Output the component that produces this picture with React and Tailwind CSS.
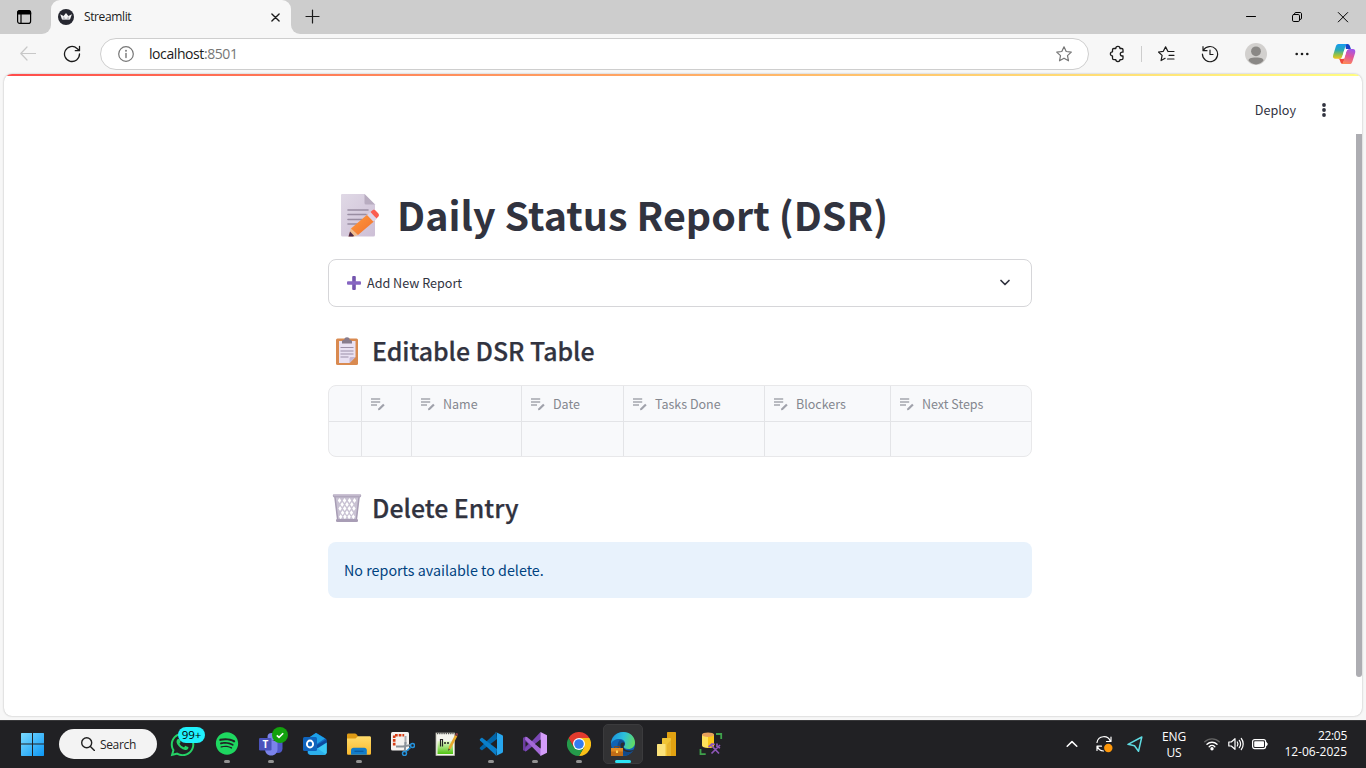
import React from "react";
import { FaWhatsapp, FaSpotify } from "react-icons/fa";

const line = { fill: "none", stroke: "currentColor", strokeLinecap: "round", strokeLinejoin: "round" };

/* ---------- browser chrome ---------- */

function TabStrip() {
  return (
    <div className="flex h-[34px] bg-[#f7f7f7]">
      <div className="flex w-[51px] shrink-0 items-center justify-end rounded-br-[9px] bg-[#cdcdcd]">
        <svg className="mr-[19px] h-4 w-4 text-black" viewBox="0 0 16 16" {...line} strokeWidth="1.2">
          <rect x="1.6" y="1.6" width="13" height="12.8" rx="2.2" />
          <path d="M1.6 4.2C1.6 2.4 2.4 1.6 4 1.6h8.200C13.800 1.600 14.600 2.400 14.600 4.200V5H1.600Z" fill="currentColor" />
          <path d="M5 5v9.200" />
        </svg>
      </div>
      <div className="flex h-[34px] w-[240px] shrink-0 flex-col bg-linear-to-b from-[#cdcdcd] from-50% to-[#f7f7f7] to-50%">
        <div className="flex h-[34px] items-center rounded-t-[9px] bg-[#f7f7f7]">
          <svg className="ml-[7px] h-4 w-4" viewBox="0 0 16 16">
            <circle cx="8" cy="8" r="8" fill="#262730" />
            <path d="M2.200 5.200 5.600 7.100 8 4 10.400 7.100 13.900 5.200 12 10.600H4Z" fill="#f4f4f4" />
            <path d="M5.600 7.100 8 10.500 10.400 7.100 11.500 10.600H4.500Z" fill="#c4c4c8" />
          </svg>
          <span className="ml-[10px] font-['Open_Sans'] text-[12px] leading-4 tracking-[-0.38px] text-[#1b1b1b]">Streamlit</span>
          <svg className="ml-auto mr-[11px] mt-px h-[9px] w-[9px] text-[#1b1b1b]" viewBox="0 0 10 10" {...line} strokeWidth="1.500">
            <path d="m1 1 8 8M9 1 1 9" />
          </svg>
        </div>
      </div>
      <div className="flex flex-1 items-center rounded-bl-[9px] bg-[#cdcdcd]">
        <svg className="ml-[14px] h-4 w-4 text-[#1b1b1b]" viewBox="0 0 16 16" {...line} strokeWidth="1.2">
          <path d="M7.500 1v13M1 7.500h13" />
        </svg>
        <svg className="ml-auto h-3 w-3 text-black" viewBox="0 0 12 12" {...line} strokeWidth="1">
          <path d="M1.500 5.500h9" />
        </svg>
        <svg className="ml-[34px] h-3 w-3 text-black" viewBox="0 0 12 12" {...line} strokeWidth="1">
          <rect x="1.500" y="3.500" width="7" height="7" rx="1.300" />
          <path d="M3.500 3.200V2.900c0-.9.600-1.400 1.400-1.400H9c1 0 1.500.5 1.500 1.500v4.100c0 .8-.5 1.400-1.400 1.400h-.3" />
        </svg>
        <svg className="ml-[34px] mr-[17px] h-3 w-3 text-black" viewBox="0 0 12 12" {...line} strokeWidth="1">
          <path d="m1.300 1.500 9.400 9.400M10.700 1.500l-9.400 9.400" />
        </svg>
      </div>
    </div>
  );
}

function CopilotIcon() {
  return (
    <svg className="h-[22px] w-[24px]" viewBox="0 0 24 22">
      <defs>
        <linearGradient id="cpa" x1="0" y1="0" x2="0" y2="1">
          <stop offset="0" stopColor="#159bf0" />
          <stop offset=".4" stopColor="#28a9b8" />
          <stop offset=".7" stopColor="#8fc04a" />
          <stop offset="1" stopColor="#f6c51c" />
        </linearGradient>
        <linearGradient id="cpb" x1="0.600" y1="0" x2="0.300" y2="1">
          <stop offset="0" stopColor="#a257e8" />
          <stop offset=".45" stopColor="#e0569a" />
          <stop offset="1" stopColor="#ff8a55" />
        </linearGradient>
      </defs>
      <path d="M13 1h2.500c1.300 0 2 .8 2.400 2l1 3H14Z" fill="#1743c8" />
      <path d="M6.500 1H15c-1 .6-1.400 1.400-1.800 2.700L10.500 13c-.6 2-1.400 2.800-3.300 2.800H3.500C1.200 15.800.6 14 1.200 12L3.800 3.500C4.300 2 5 1 6.500 1Z" fill="url(#cpa)" />
      <path d="M6.200 15.800c1 0 1.500.8 1.900 2.300.5 1.800 1.100 2.900 2.900 2.900l1.600-5.200Z" fill="#ef4a3c" />
      <path d="M17.500 21H9.500c1.100-.5 1.600-1.500 2-2.800L14.200 9c.6-2 1.400-2.900 3.300-2.900h3.300c2.300 0 2.900 1.900 2.300 3.900l-2.700 8.400C19.900 20 19.100 21 17.500 21Z" fill="url(#cpb)" />
      <path d="M11.900 7.900c.4-1.200 1.200-1.700 2.300-1.700h2.300c-1.300.4-1.900 1.300-2.400 2.800l-1.500 5.100c-.4 1.200-1.200 1.700-2.400 1.700H8.300c1.200-.4 1.700-1.400 2.200-2.900Z" fill="#fff" />
    </svg>
  );
}

function Toolbar() {
  return (
    <div className="flex h-[40px] items-center bg-[#f7f7f7]">
      <svg className="ml-5 h-4 w-4 text-[#c8c8c8]" viewBox="0 0 16 16" {...line} strokeWidth="1.200">
        <path d="M15.500 7.500H1M7 1 .800 7.500 7 14" />
      </svg>
      <svg className="ml-[27px] h-[18px] w-[18px] text-[#1b1b1b]" viewBox="0 0 18 18" {...line} strokeWidth="1.300">
        <path d="M16.500 9a7.500 7.500 0 1 1-2.500-5.600L16.300 5.500M16.500 1.500v4.200h-4.200" />
      </svg>
      <div className="ml-[19px] flex h-8 w-[989px] items-center rounded-full border border-[#cecece] bg-white">
        <svg className="ml-[17px] h-4 w-4 text-[#767676]" viewBox="0 0 16 16" {...line} strokeWidth="1.200">
          <circle cx="8" cy="8" r="7.300" />
          <path d="M8 7.500v4" strokeWidth="1.400" />
          <circle cx="8" cy="4.800" r=".4" />
        </svg>
        <span className="ml-[15px] font-['Open_Sans'] text-[14px] leading-5 tracking-[-0.42px] text-[#1b1b1b]">
          localhost<span className="text-[#767676]">:8501</span>
        </span>
        <svg className="ml-auto mr-4 h-4 w-4 text-[#767676]" viewBox="0 0 16 16" {...line} strokeWidth="1.200">
          <path d="m8 .8 2.200 4.700 5.100.6-3.800 3.500 1 5.200L8 12.200l-4.500 2.600 1-5.200L.7 6.100l5.100-.6Z" />
        </svg>
      </div>
      <svg className="ml-[19px] h-[18px] w-[18px] text-[#1b1b1b]" viewBox="0 0 18 18" {...line} strokeWidth="1.300">
        <path d="M5.800 3.500h2a2.100 2.100 0 0 1 4.200 0h1.700c.7 0 1.300.6 1.300 1.300v2.400h-.8a1.900 1.900 0 0 0 0 3.800h.8v2.300c0 .7-.6 1.300-1.300 1.300H12a2.100 2.100 0 0 1-4.200 0h-2c-.7 0-1.300-.6-1.300-1.300V11a2.100 2.100 0 1 1 0-4.200v-2c0-.7.600-1.300 1.300-1.300Z" />
      </svg>
      <div className="ml-[15px] h-4 w-px bg-[#cdcdcd]" />
      <svg className="ml-4 h-4 w-[17px] text-[#1b1b1b]" viewBox="0 0 17 16" {...line} strokeWidth="1.200">
        <path d="M10 5.500 7.600.9 5.300 5.300.5 6l3.600 3.400-1 5.200 4-2.300M10 5.500h6M11 9.300h5M9.500 13h6.500" />
      </svg>
      <svg className="ml-[26px] h-[18px] w-[18px] text-[#1b1b1b]" viewBox="0 0 18 18" {...line} strokeWidth="1.200">
        <path d="M2.300 5.500A7.600 7.600 0 1 1 1.400 9M2 1.700v4h4M9 5.200v4.300h3" />
      </svg>
      <svg className="ml-[26px] h-[22px] w-[22px]" viewBox="0 0 22 22">
        <circle cx="11" cy="11" r="11" fill="#d2d0ce" />
        <circle cx="11" cy="8.300" r="4.900" fill="#8a8886" />
        <path d="M3.500 17.500c0-2 2-3.100 7.500-3.100s7.500 1.100 7.500 3.100c-1.500 2.200-4.500 3.900-7.500 3.900s-6-1.700-7.500-3.900Z" fill="#8a8886" />
      </svg>
      <svg className="ml-7 h-4 w-[14px] text-[#1b1b1b]" viewBox="0 0 14 16" fill="currentColor">
        <circle cx="1.700" cy="8" r="1.300" />
        <circle cx="7" cy="8" r="1.300" />
        <circle cx="12.300" cy="8" r="1.300" />
      </svg>
      <div className="ml-[23px]">
        <CopilotIcon />
      </div>
    </div>
  );
}

/* ---------- emoji drawings ---------- */

function MemoEmoji() {
  return (
    <svg className="-mt-0.5 h-11 w-10" viewBox="0 0 40 44">
      <defs>
        <linearGradient id="paper" x1="0" y1="0" x2="1" y2="1">
          <stop offset="0" stopColor="#e0d9e6" />
          <stop offset="1" stopColor="#cdbfd6" />
        </linearGradient>
        <linearGradient id="pencil" x1="0" y1="0" x2="1" y2="1">
          <stop offset="0" stopColor="#ff9a3d" />
          <stop offset="1" stopColor="#f0702e" />
        </linearGradient>
      </defs>
      <path d="M2 1h22.500L35 11.500V42a1.500 1.500 0 0 1-1.500 1.500H2.500A1.500 1.500 0 0 1 1 42V2a1 1 0 0 1 1-1Z" fill="url(#paper)" />
      <path d="M24.500 1 35 11.500h-9A1.500 1.500 0 0 1 24.500 10Z" fill="#b8acc0" />
      <path d="M8 17h20M8 21.500h18M8 26.500h14M8 31h9" stroke="#998da2" strokeWidth="1.600" strokeLinecap="round" />
      <path d="M8.500 43.500 11 35l7 7-4 1.500Z" fill="#f0bd8f" />
      <path d="m8.500 43.500 1.500-5 4 4.200-.8.8Z" fill="#4d2948" />
      <path d="M11 35.500 28 21l6.500 7L18 42Z" fill="url(#pencil)" />
      <path d="m27 22 3.500-3 6.300 6.800-3.300 3Z" fill="#ddd3e8" />
      <path d="m30.500 19 2-1.700c1.200-.9 2.500-.5 3.500.6l2.200 2.400c1 1.200 1 2.500 0 3.500l-1.700 1.700Z" fill="#fb5c51" />
    </svg>
  );
}

function PlusEmoji() {
  return (
    <svg className="h-[14px] w-[14px]" viewBox="0 0 14 14">
      <rect x="5.200" y="0" width="3.600" height="14" rx="1" fill="#7455ae" />
      <rect x="0" y="5.200" width="14" height="3.600" rx="1" fill="#8665c2" />
    </svg>
  );
}

function ClipboardEmoji() {
  return (
    <svg className="-mt-[3px] h-[28px] w-6" viewBox="0 0 24 28">
      <rect x="1" y="1.500" width="22" height="26.500" rx="1.500" fill="#d98a50" />
      <path d="M4 4h16.500v16l-6 6H4Z" fill="#e9e1f2" />
      <path d="m20.500 20-6 6v-4.500c0-.9.600-1.500 1.500-1.500Z" fill="#c6b7d3" />
      <path d="M5.500 10.500h13M5.500 14h13M5.500 17h13M5.500 20h8" stroke="#9c90a8" strokeWidth="1.100" />
      <path d="M7 6.500V4.500C7 3.500 8 3 9.300 2.800 9.500 1 10.500.3 12 .3s2.500.7 2.700 2.500C16 3 17 3.500 17 4.500v2Z" fill="#877b8c" />
    </svg>
  );
}

function BasketEmoji() {
  const holes = [];
  for (let r = 0; r < 5; r++) {
    const inset = r * 0.35;
    const count = r % 2 ? 3 : 4;
    const step = (18 - inset * 2) / 3.6;
    for (let c = 0; c < count; c++) holes.push([15 + (c - (count - 1) / 2) * step, 7.4 + r * 4.1]);
  }
  return (
    <svg className="-mt-0.5 h-[30px] w-[30px]" viewBox="0 0 30 30">
      <path d="M2.500 2h25L24.500 28h-19Z" fill="#c9c2d3" />
      {holes.map(([x, y], i) => (
        <path key={i} d={`M${x} ${y - 2.5}l1.700 2.500-1.700 2.500-1.700-2.500Z`} fill="#fff" />
      ))}
      <path d="M2.800 3 5.700 27M27.200 3l-2.900 24" stroke="#a79cb4" strokeWidth="1.500" />
      <rect x=".8" y="1" width="28.400" height="3.400" rx="1.600" fill="#b0a6bc" />
      <rect x="1.500" y="1.300" width="27" height="1.300" rx=".6" fill="#d3ccdb" />
      <rect x="4" y="26" width="22" height="3" rx="1.300" fill="#a89db5" />
    </svg>
  );
}

/* ---------- app page ---------- */

function EditIcon() {
  return (
    <svg className="h-[14px] w-4 shrink-0" viewBox="0 0 16 14">
      <path d="M1 2h9.200M1 5h9.200M1 8h6" stroke="#b9bbc1" strokeWidth="2" />
      <path d="m8 13.300.3-1.900 4.800-4.700 1.600 1.500-4.900 4.900Z" fill="#a0a2ab" />
    </svg>
  );
}

const columns = ["", "Name", "Date", "Tasks Done", "Blockers", "Next Steps"];

function DataTable() {
  const grid = "grid grid-cols-[33px_50px_110px_102px_141px_126px_1fr]";
  return (
    <div className="mt-[13px] h-[72px] overflow-hidden rounded-lg border border-[#e8e8ea] bg-[#f8f9fb]">
      <div className={`${grid} h-9 border-b border-[#e3e4e7]`}>
        <div className="border-r border-[#e3e4e7]" />
        {columns.map((c, i) => (
          <div key={i} className="flex items-center border-r border-[#e3e4e7] pl-2 last:border-r-0">
            <EditIcon />
            <span className="ml-[7px] whitespace-nowrap text-[12.500px] leading-5 text-[#84878f]">{c}</span>
          </div>
        ))}
      </div>
      <div className={`${grid} h-[35px]`}>
        {[0, 1, 2, 3, 4, 5, 6].map((i) => (
          <div key={i} className="border-r border-[#e3e4e7] last:border-r-0" />
        ))}
      </div>
    </div>
  );
}

function Page() {
  return (
    <div className="ml-1 flex h-[642px] w-[1358px] flex-col overflow-hidden rounded-lg bg-white font-['Noto_Sans_CJK_SC',sans-serif] text-[#31333f] shadow-[0_0_2px_rgba(0,0,0,0.3)]">
      <div className="h-0.5 shrink-0 bg-linear-to-r from-[#ff4b4b] to-[#fffd80]" />
      <div className="flex h-[58px] shrink-0 items-center pt-2.5">
        <span className="ml-auto text-[12.600px] leading-5">Deploy</span>
        <svg className="ml-[25px] mr-[35px] h-4 w-1.5" viewBox="0 0 6 16" fill="#31333f">
          <circle cx="3" cy="3" r="1.900" />
          <circle cx="3" cy="8" r="1.900" />
          <circle cx="3" cy="13" r="1.900" />
        </svg>
      </div>
      <div className="flex flex-1">
        <div className="ml-[324px] w-[704px] pt-[46px]">
          <h1 className="flex h-[72px] items-center pl-3">
            <MemoEmoji />
            <span className="-mt-1 ml-[17px] whitespace-nowrap text-[39.400px] font-bold leading-[52px] tracking-[0.035px]">Daily Status Report (DSR)</span>
          </h1>
          <div className="mt-[7px] flex h-12 items-center rounded-lg border border-[#d6d6d9] pl-[18px] pr-5">
            <PlusEmoji />
            <span className="ml-1.5 text-[12.600px] leading-5">Add New Report</span>
            <svg className="ml-auto h-3 w-3" viewBox="0 0 12 12" {...line} strokeWidth="1.700">
              <path d="m2 3.500 4 4 4-4" />
            </svg>
          </div>
          <h3 className="mt-[25px] flex h-10 items-center pl-[7px]">
            <ClipboardEmoji />
            <span className="-mt-[5px] ml-[13px] whitespace-nowrap text-[24.900px] font-medium leading-8 tracking-[-0.03px] [-webkit-text-stroke:0.25px_#31333f]">Editable DSR Table</span>
          </h3>
          <DataTable />
          <h3 className="mt-8 flex h-10 items-center pl-1">
            <BasketEmoji />
            <span className="-mt-[5px] ml-[10px] whitespace-nowrap text-[24.900px] font-medium leading-8 [-webkit-text-stroke:0.25px_#31333f]">Delete Entry</span>
          </h3>
          <div className="mt-[13px] flex h-14 items-center rounded-lg bg-[#e8f2fc] pl-4">
            <span className="text-[14.300px] leading-6 text-[#004280]">No reports available to delete.</span>
          </div>
        </div>
        <div className="ml-auto h-[543px] w-1.5 rounded-b-[3px] bg-[#adadb2]" />
      </div>
    </div>
  );
}

/* ---------- taskbar ---------- */

function WindowsIcon() {
  return (
    <svg className="h-6 w-6" viewBox="0 0 24 24">
      <defs>
        <linearGradient id="win" gradientUnits="userSpaceOnUse" x1="0" y1="0" x2="24" y2="24">
          <stop offset="0" stopColor="#7ddcff" />
          <stop offset="1" stopColor="#0a96f5" />
        </linearGradient>
      </defs>
      <path d="M.5 1H11v10.500H0V1.500ZM12 1h10.500l.5.500v10H12ZM0 12.500h11V24H.5L0 23.500ZM12 12.500h11v11l-.5.500H12Z" fill="url(#win)" />
    </svg>
  );
}

function TeamsIcon() {
  return (
    <svg className="h-6 w-6" viewBox="0 0 24 24">
      <circle cx="12.500" cy="5" r="4" fill="#7b83eb" />
      <circle cx="20" cy="6" r="2.800" fill="#5059c9" />
      <path d="M15 9h8.500v7.500c0 3-2 4.500-4.500 4.500S15 19 15 16Z" fill="#5059c9" />
      <path d="M6 9h12.500v8c0 4-2.500 6.500-6.300 6.500S6 21 6 17Z" fill="#7b83eb" />
      <rect x="0" y="6" width="12.500" height="12.500" rx="1.200" fill="#4b53bc" />
      <text x="6.300" y="16" textAnchor="middle" fill="#fff" fontSize="10" fontWeight="700" fontFamily="Open Sans">T</text>
    </svg>
  );
}

function OutlookIcon() {
  return (
    <svg className="h-6 w-6" viewBox="0 0 24 24">
      <path d="m13 .8 9.500 5.700c.7.400 1 .9 1 1.700v12c0 1.500-1 2.500-2.500 2.500H7c-1.500 0-2.500-1-2.500-2.500V7Z" fill="#1268c0" />
      <path d="M6 5.500 13 1l9 5.500-9 6Z" fill="#1da1e8" />
      <path d="m14 13 9.500-5.500V12L14 18Z" fill="#0c4ba0" />
      <path d="M23.800 10.500v9.700c0 1.500-1 2.600-2.600 2.600H7l2-3Z" fill="#3bc9f6" />
      <path d="M5 16h9l8.500 6c-.5.500-1 .7-2 .7H7.500c-1.500 0-2.500-1-2.500-2.500Z" fill="#2cb0ec" />
      <rect x="0" y="5" width="14" height="14" rx="1.500" fill="#0f64bd" />
      <ellipse cx="7" cy="12" rx="3.100" ry="3.500" fill="none" stroke="#fff" strokeWidth="1.900" />
    </svg>
  );
}

function FolderIcon() {
  return (
    <svg className="h-6 w-6" viewBox="0 0 24 24">
      <defs>
        <linearGradient id="fold" x1="0" y1="0" x2="0" y2="1">
          <stop offset="0" stopColor="#ffdc6b" />
          <stop offset="1" stopColor="#f9b92e" />
        </linearGradient>
      </defs>
      <path d="M0 3c0-1 .6-1.500 1.500-1.500h6.300c.8 0 1.400.3 1.900.9L11.500 5 9 8H0Z" fill="#df9b14" />
      <path d="M0 6.500h8.500L11 4.300h11.500c1 0 1.500.6 1.500 1.500v15.500c0 1-.6 1.500-1.500 1.500h-21C.5 22.800 0 22.300 0 21.300Z" fill="url(#fold)" />
      <path d="M4 22.800v-4.500c0-1.500 1-2.500 2.500-2.500h10.800c1.500 0 2.500 1 2.500 2.500v4.500Z" fill="#127cc9" />
      <path d="M7.500 19.300h9" stroke="#0a5ba0" strokeWidth="1.300" />
    </svg>
  );
}

function SnipIcon() {
  return (
    <svg className="h-6 w-6" viewBox="0 0 24 24">
      <rect x="0" y="0" width="18" height="18.500" rx="1.500" fill="#f5f3f1" />
      <path d="M3.200 13.500V3.200h10" fill="none" stroke="#d63e16" strokeWidth="2.600" strokeDasharray="2.700 1" />
      <path d="M14.500 4v8" stroke="#a9abb0" strokeWidth="2" fill="none" />
      <path d="M5 14.500h7l8-1.500M14.500 10l-.8 10" stroke="#8a929a" strokeWidth="2" fill="none" />
      <circle cx="21.500" cy="13.500" r="2" fill="none" stroke="#2492dc" strokeWidth="1.500" />
      <circle cx="13.500" cy="21.500" r="2" fill="none" stroke="#2492dc" strokeWidth="1.500" />
      <path d="m15 19.500 4.500-4" stroke="#2492dc" strokeWidth="1.600" />
    </svg>
  );
}

function NotepadIcon() {
  return (
    <svg className="h-6 w-6" viewBox="0 0 24 24">
      <defs>
        <linearGradient id="npp" x1="0" y1="0" x2="0" y2="1">
          <stop offset="0" stopColor="#eafbd0" />
          <stop offset="1" stopColor="#4fc410" />
        </linearGradient>
      </defs>
      <rect x="1" y="1" width="18.500" height="22.500" fill="#f5f5ee" stroke="#b8b8ac" strokeWidth=".8" />
      <path d="M2 1.300h16.500" stroke="#525252" strokeWidth="1.800" strokeDasharray="1.200 1" />
      <rect x="2.500" y="9" width="15.500" height="13" fill="url(#npp)" />
      <path d="M5.500 14.500v-7h2v7" fill="none" stroke="#222" strokeWidth="1.200" />
      <path d="M9 11h2M10 10v2M12 11h2M13 10v2" stroke="#222" strokeWidth="1" />
      <path d="m13 19 1-4.500L20 3l2.300 1.200-6.300 12Z" fill="#e7a92e" />
      <path d="m20 3 .8-1.700c.8-.9 2.400 0 2.200 1.200L22.300 4.200Z" fill="#863c42" />
      <path d="m13 19 .6-2.500 1.400.7Z" fill="#333" />
    </svg>
  );
}

function VsCodeIcon() {
  return (
    <svg className="h-6 w-6" viewBox="0 0 24 24">
      <path d="M17.300.2 1 15.500c-.4.4-.4 1 0 1.400l1.300 1.200c.4.300.8.300 1.200 0L18 7Z" fill="#0065a9" />
      <path d="M17.300 23.800 1 8.500c-.4-.4-.4-1 0-1.400l1.300-1.200c.4-.3.8-.3 1.200 0L18 17Z" fill="#0a7fca" />
      <path d="M17.300.2 23 3c.6.300 1 .8 1 1.500v15c0 .7-.4 1.200-1 1.500l-5.700 2.800c-.6.200-1 .1-1.300-.200.8.6 2 0 2-1V1.500c0-1-1.200-1.600-2-1 .3-.4.800-.500 1.300-.3Z" fill="#27a6ee" />
    </svg>
  );
}

function VisualStudioIcon() {
  return (
    <svg className="h-6 w-6" viewBox="0 0 24 24">
      <path d="M0 5.800 2.500 4.800 6 8v8l-3.500 3.200L0 18.200Z" fill="#6b3d9f" />
      <path d="M17.500 0 2 16.500v2.900L3.500 19 18 7.500Z" fill="#7b47b6" />
      <path d="M2.500 4.800 4 5 18 16.500V24L2 7.500Z" fill="#a46ad7" />
      <path d="M2.500 9.300 5.300 12l-2.800 2.700Z" fill="#232226" />
      <path d="M17.500 0 24 3.200v17.600L17.500 24Z" fill="#d39cf9" />
      <path d="m17.500 7.500-5.500 4.500 5.500 4.500Z" fill="#232226" />
    </svg>
  );
}

function ChromeIcon() {
  return (
    <svg className="h-6 w-6" viewBox="0 0 24 24">
      <path d="M22.400 6A12 12 0 0 1 12 24L17.200 15 12 6Z" fill="#fbc117" />
      <path d="M1.600 6A12 12 0 0 0 12 24l5.200-9H6.800Z" fill="#249a4a" />
      <path d="M12 6h10.400A12 12 0 0 0 1.600 6l5.200 9Z" fill="#e33b2e" />
      <circle cx="12" cy="12" r="6" fill="#fff" />
      <circle cx="12" cy="12" r="4.800" fill="#327cf0" />
    </svg>
  );
}

function EdgeIcon() {
  return (
    <svg className="h-6 w-6" viewBox="0 0 24 24">
      <defs>
        <linearGradient id="edgeA" x1="0" y1=".3" x2="1" y2=".5">
          <stop offset="0" stopColor="#1b93dc" />
          <stop offset=".5" stopColor="#2cc0db" />
          <stop offset="1" stopColor="#62db63" />
        </linearGradient>
      </defs>
      <circle cx="12" cy="12" r="12" fill="#0f63b4" />
      <path d="M0 12C0 5 5.400 0 12.200 0 19 0 24 4.700 24 10.500c0 4-3 6.500-6.700 6.500-3 0-4.500-1.200-4.500-2.200 0-.8 1.300-1.200 1.300-3.100C14.100 9 11.700 7 8.500 7 4 7 1 9 0 12Z" fill="url(#edgeA)" />
      <path d="M8.800 8c3 0 5 1.800 5 4 0 1.600-1.300 2.100-1.300 3.100 0 1.700 2 3.500 5.500 3.500 2 0 3.300-.4 4.600-1.100A12 12 0 0 1 14 23.800C9.200 23.500 6.500 19 6.500 14c0-2.500 1-4.500 2.300-6Z" fill="#124a8b" />
      <path d="M9.500 12.500c.5-1.500 2-2.500 4-1.500.3 1.800-1.200 2.800-1.200 4 .4 1.700 2.500 3.600 5.900 3.600 1.700 0 3.200-.4 4.600-1.200-1.500 2-4 2.800-6.500 2.500-4-.5-7-3.500-6.800-7.400Z" fill="#2b2c30" />
      <path d="M0 16h12v8H0Z" fill="#c06c16" />
      <path d="M0 16h12v3.500H0Z" fill="#e28b23" />
      <path d="M3.500 16v-1.300h5V16" fill="none" stroke="#8a4710" />
      <rect x="5" y="18.500" width="2" height="2.500" fill="#ffd454" />
    </svg>
  );
}

function PowerBiIcon() {
  return (
    <svg className="h-6 w-6" viewBox="0 0 24 24">
      <rect x="12" y="0" width="9" height="24" rx=".6" fill="#e1a211" />
      <rect x="7" y="6" width="9" height="18" rx=".6" fill="#f0c436" />
      <path d="M12 12.600V24h4V8Z" fill="#dda424" opacity=".5" />
      <rect x="2" y="12" width="8.500" height="12" rx=".6" fill="#fbe27a" />
    </svg>
  );
}

function DatabaseToolIcon() {
  return (
    <svg className="h-6 w-6" viewBox="0 0 24 24">
      <path d="M3 2.500v11C3 15 5.500 16 9 16s6-1 6-2.500v-11Z" fill="#ffe25a" />
      <path d="M9 3h6v10.500C15 15 12.500 16 9 16Z" fill="#fbc718" />
      <ellipse cx="9" cy="2.700" rx="6" ry="2.300" fill="#e8a15b" />
      <path d="M17 2h5.200v5M1.500 17v5.200h5.200" fill="none" stroke="#3fa14b" strokeWidth="1.800" />
      <path d="m12 13 8 8.500M21 13l-8.500 8.500M9.500 15l3.500-3 3 .5M18 11.500v3l3 1.500" fill="none" stroke="#8e56b8" strokeWidth="1.700" />
    </svg>
  );
}

function TaskSlot({ children, dot, active, badge }) {
  return (
    <div className="relative flex h-12 w-11 shrink-0 flex-col items-center">
      <div
        className={
          active
            ? "mt-1 flex h-10 w-10 items-start justify-center rounded-[5px] border border-[#3b3b3d] bg-[#323234] pt-[7px]"
            : "mt-1 flex h-10 w-10 items-start justify-center pt-2"
        }
      >
        {children}
      </div>
      {dot && <div className="-mt-1 h-[3px] w-1.5 rounded-full bg-[#929292]" />}
      {active && <div className="-mt-1 h-[3px] w-4 rounded-full bg-[#2de3f4]" />}
      {badge}
    </div>
  );
}

function Taskbar() {
  return (
    <div className="mt-1 flex h-12 items-center bg-[#212124] font-['Open_Sans',sans-serif] shadow-[inset_0_1px_0_#38383a]">
      <div className="ml-[21px]">
        <WindowsIcon />
      </div>
      <div className="ml-[14px] flex h-[30px] w-[98px] items-center rounded-full bg-[#f3f3f3] pl-[22px]">
        <svg className="h-[14px] w-[14px] text-[#202020]" viewBox="0 0 14 14" {...line} strokeWidth="1.400">
          <circle cx="5.700" cy="5.700" r="5" />
          <path d="m9.400 9.400 4 4" />
        </svg>
        <span className="ml-[5px] pt-0.5 text-[12px] leading-4 tracking-[-0.35px] text-[#262626]">Search</span>
      </div>
      <div className="ml-1 flex">
        <TaskSlot
          badge={
            <div className="absolute left-[17px] top-[7px] flex h-4 w-[27px] items-center justify-center rounded-full bg-[#20f1fc] text-[11.500px] leading-4 text-black">
              99+
            </div>
          }
        >
          <FaWhatsapp className="-mt-px -ml-px h-[27px] w-[27px] shrink-0 text-[#25d366]" />
        </TaskSlot>
        <TaskSlot dot>
          <FaSpotify className="h-[23px] w-6 text-[#1ed760]" />
        </TaskSlot>
        <TaskSlot
          dot
          badge={
            <svg className="absolute left-[23px] top-[7px] h-4 w-4" viewBox="0 0 16 16">
              <circle cx="8" cy="8" r="8" fill="#13a10e" />
              <path d="m4.800 8.300 2.200 2.100 4.200-4.200" fill="none" stroke="#fff" strokeWidth="1.600" />
            </svg>
          }
        >
          <TeamsIcon />
        </TaskSlot>
        <TaskSlot><OutlookIcon /></TaskSlot>
        <TaskSlot dot><FolderIcon /></TaskSlot>
        <TaskSlot><SnipIcon /></TaskSlot>
        <TaskSlot><NotepadIcon /></TaskSlot>
        <TaskSlot dot><VsCodeIcon /></TaskSlot>
        <TaskSlot dot><VisualStudioIcon /></TaskSlot>
        <TaskSlot dot><ChromeIcon /></TaskSlot>
        <TaskSlot active><EdgeIcon /></TaskSlot>
        <TaskSlot><PowerBiIcon /></TaskSlot>
        <TaskSlot><DatabaseToolIcon /></TaskSlot>
      </div>
      <div className="ml-auto flex h-12 items-center text-white">
        <svg className="h-3 w-3" viewBox="0 0 12 12" {...line} strokeWidth="1.500">
          <path d="M1.200 8.300 6 3.600l4.800 4.700" />
        </svg>
        <svg className="ml-[17px] h-[18px] w-[18px]" viewBox="0 0 18 18" {...line} strokeWidth="1.200">
          <path d="M2 7.500a6.900 6.900 0 0 1 13.300-1.200M16 2v4.500h-4.500M2.500 11.500a6.500 6.500 0 0 0 6 4.500M2 15.500v-4.300h4.500" />
          <circle cx="13.300" cy="13" r="4.200" fill="#ff980a" stroke="none" />
        </svg>
        <svg className="ml-[14px] h-4 w-4 text-[#5fdbe2]" viewBox="0 0 16 16" {...line} strokeWidth="1.500">
          <path d="M14.800 1 1 8.300l6.500 1.400 4 5.600Z" />
        </svg>
        <div className="ml-[17px] flex w-7 flex-col items-center pt-0.5 text-[12px] leading-4 tracking-[-0.2px]">
          <div>ENG</div>
          <div>US</div>
        </div>
        <svg className="ml-4 h-4 w-4" viewBox="0 0 16 16" {...line} strokeWidth="1.400">
          <path d="M.8 5.800a10.300 10.300 0 0 1 14.400 0" stroke="#666" />
          <path d="M3 8.300a7.200 7.200 0 0 1 10 0M5.200 10.700a4 4 0 0 1 5.600 0" />
          <circle cx="8" cy="12.700" r="1" fill="currentColor" />
        </svg>
        <svg className="ml-2 h-4 w-4" viewBox="0 0 16 16" {...line} strokeWidth="1.200">
          <path d="M.8 6v4h2.500L7 13.300V2.700L3.300 6ZM9.300 6c.8 1.200.8 2.800 0 4M11.300 4.300c1.700 2 1.700 5.400 0 7.400M13.300 2.500c2.500 3 2.500 8 0 11" />
        </svg>
        <svg className="ml-2 h-4 w-4" viewBox="0 0 16 16">
          <rect x=".6" y="3.600" width="13" height="9" rx="2" fill="none" stroke="#fff" strokeWidth="1.200" />
          <rect x="2.200" y="5.200" width="9.800" height="5.800" rx=".8" fill="#fff" />
          <path d="M14.500 6.500c.9.300.9 2.900 0 3.200Z" fill="#fff" stroke="#fff" />
        </svg>
        <div className="ml-[12px] mr-[19px] flex w-[67px] flex-col items-end whitespace-nowrap text-[12px] leading-4">
          <div className="tracking-[-0.3px]">22:05</div>
          <div>12-06-2025</div>
        </div>
      </div>
    </div>
  );
}

export default function App() {
  return (
    <div className="h-[768px] w-[1366px] overflow-hidden bg-[#f7f7f7]">
      <TabStrip />
      <Toolbar />
      <Page />
      <Taskbar />
    </div>
  );
}
